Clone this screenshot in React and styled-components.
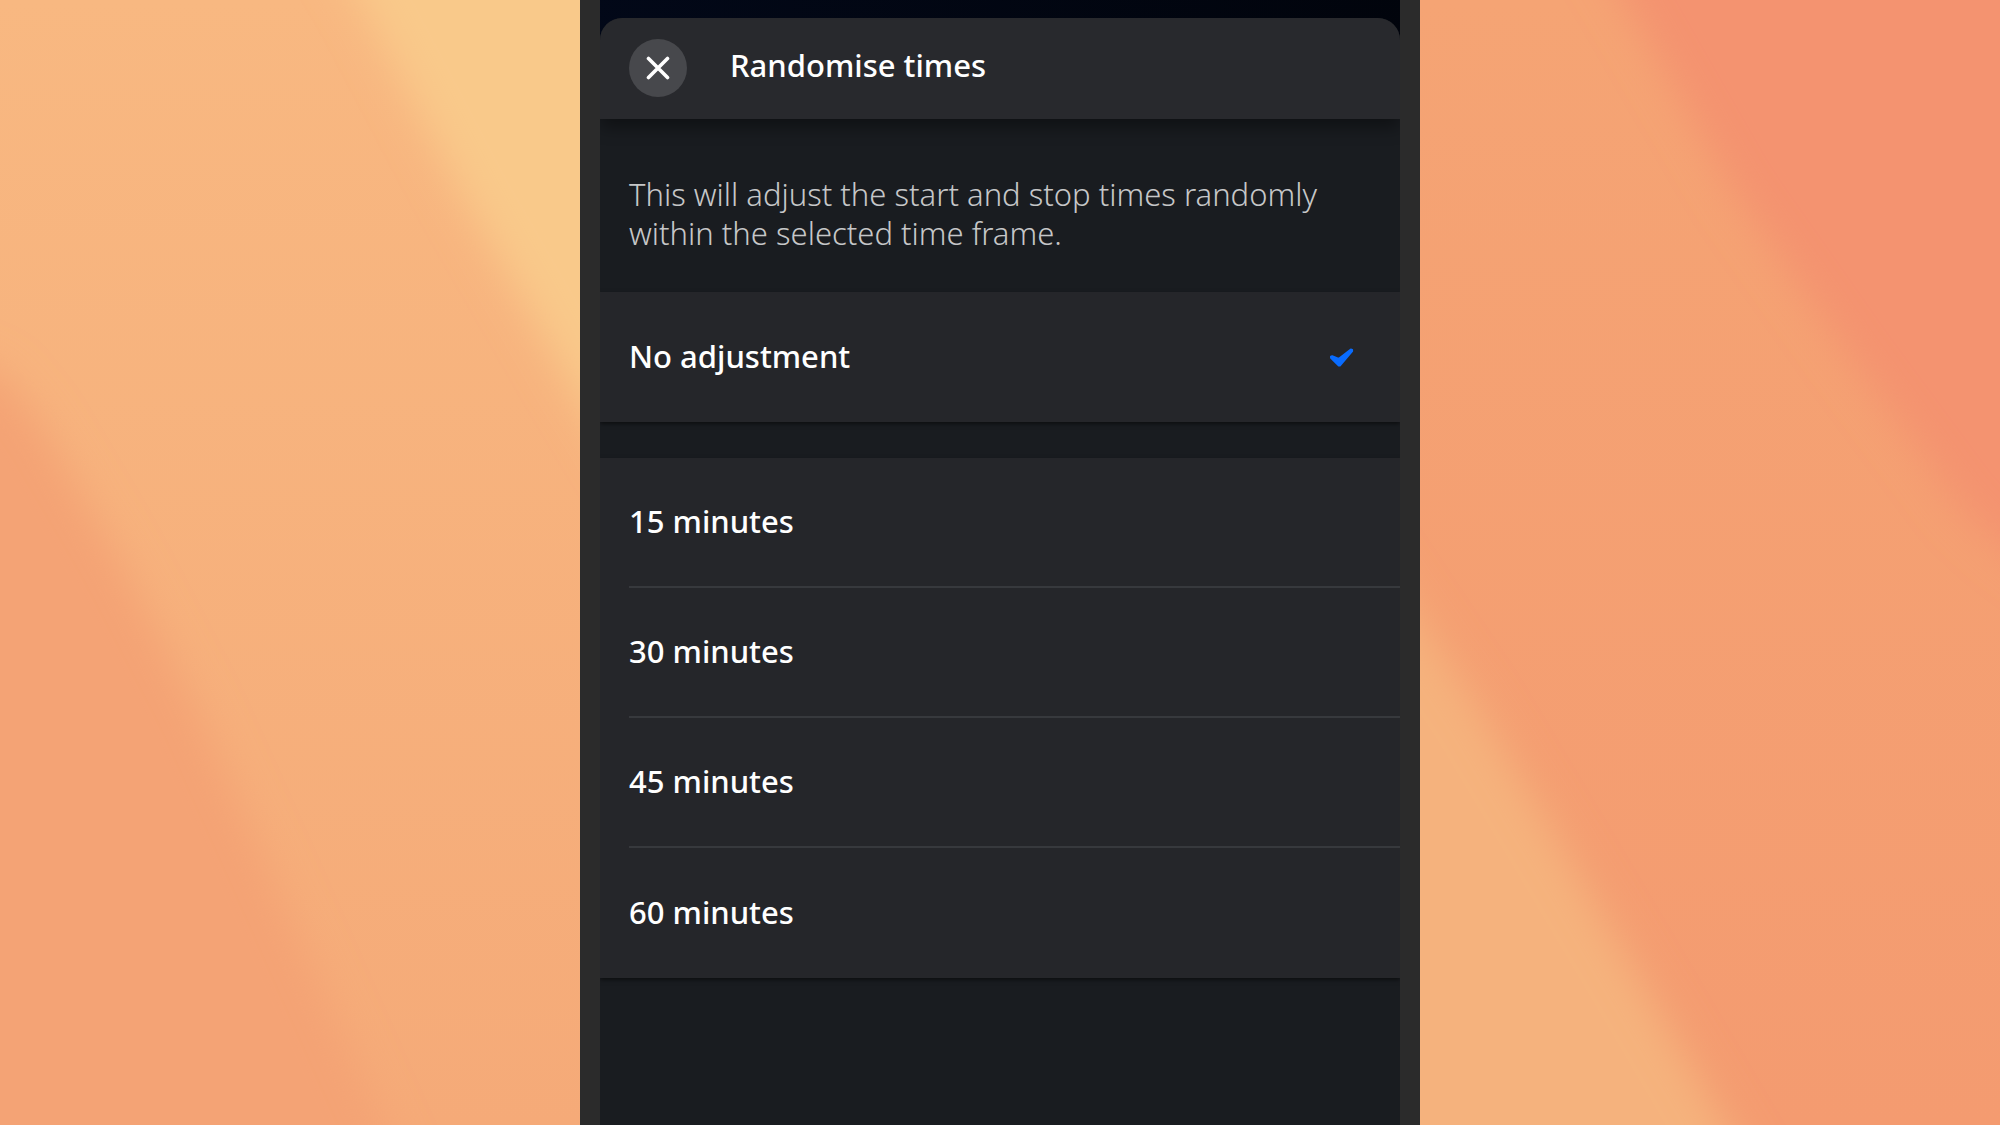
import React from 'react';
import styled, { createGlobalStyle } from 'styled-components';

const GlobalStyle = createGlobalStyle`
  *, *::before, *::after {
    box-sizing: border-box;
  }

  body {
    margin: 0;
    background: #f5ab78;
    font-family: 'Noto Sans', 'Open Sans', sans-serif;
  }
`;

const Page = styled.div`
  position: relative;
  display: flex;
  justify-content: center;
  min-height: 100vh;
  overflow: hidden;
`;

// sits behind everything else
const WallpaperSvg = styled.svg`
  position: absolute;
  inset: 0;
  width: 100%;
  height: 100%;
`;

const Phone = styled.div`
  position: relative;
  display: flex;
  width: 100%;
  max-width: 840px;
  padding: 18px 20px 0;
  background:
    linear-gradient(90deg, #2b2b2b 20px, transparent 20px, transparent calc(100% - 20px), #2b2b2b calc(100% - 20px)),
    linear-gradient(90deg, #020818, #01040c);
`;

const Sheet = styled.main`
  flex: 1;
  overflow: clip;
  background: #191c20;
  border-radius: 22px 22px 0 0;
`;

const Header = styled.header`
  position: relative;
  display: flex;
  align-items: center;
  gap: 43px;
  padding: 21px 29px 22px;
  background: #28292d;
  box-shadow: 0 8px 16px rgba(0, 0, 0, 0.4);
`;

const CloseButton = styled.button`
  display: flex;
  align-items: center;
  justify-content: center;
  width: 58px;
  height: 58px;
  padding: 0;
  border: none;
  border-radius: 50%;
  background: #47484c;
  color: #fff;
  cursor: pointer;
`;

const Title = styled.h1`
  margin: 0;
  padding-bottom: 6px;
  font-size: 31px;
  font-weight: 500;
  line-height: 40px;
  color: #fff;
`;

const Description = styled.p`
  margin: 0;
  padding: 56px 29px 39px;
  font-size: 31px;
  font-weight: 300;
  line-height: 39px;
  color: #c6c7c8;
`;

const OptionGroup = styled.div`
  margin-bottom: 36px;
  background: #25262a;
  box-shadow: 0 2px 4px rgba(0, 0, 0, 0.5);
`;

const OptionRow = styled.label`
  display: flex;
  align-items: center;
  justify-content: space-between;
  height: 130px;
  margin-left: 29px;
  padding-right: 46px;
  cursor: pointer;

  &:not(:last-child) {
    border-bottom: 2px solid #37393d;
  }
`;

const OptionText = styled.span`
  padding-bottom: 3px;
  font-size: 31px;
  font-weight: 500;
  line-height: 40px;
  color: #fff;
`;

const RadioMark = styled.span`
  display: grid;

  & > * {
    grid-area: 1 / 1;
  }

  svg {
    visibility: hidden;
    pointer-events: none;
  }

  input:checked + svg {
    visibility: visible;
  }
`;

const Radio = styled.input`
  appearance: none;
  width: 24px;
  height: 22px;
  margin: 0;
  cursor: pointer;
`;

const Wallpaper = () => (
  <WallpaperSvg viewBox="0 0 2000 1125" preserveAspectRatio="none" aria-hidden="true">
    <defs>
      <linearGradient id="leftBase" x1="0" y1="0" x2="0" y2="1">
        <stop offset="0" stopColor="#f8b881" />
        <stop offset="1" stopColor="#f5aa78" />
      </linearGradient>
      <linearGradient id="rightBase" x1="0" y1="0" x2="0" y2="1">
        <stop offset="0" stopColor="#f5a474" />
        <stop offset="1" stopColor="#f49b70" />
      </linearGradient>
      <filter id="soft" x="-20%" y="-20%" width="140%" height="140%">
        <feGaussianBlur stdDeviation="20" />
      </filter>
    </defs>
    <rect width="1000" height="1125" fill="url(#leftBase)" />
    <rect x="1000" width="1000" height="1125" fill="url(#rightBase)" />
    <g filter="url(#soft)">
      <path d="M324 -60 L360 0 L465 200 L580 400 L700 600 V-60 Z" fill="#f9c98a" />
      <path d="M-60 350 L0 374 L38 420 L115 552 L196 707 L278 890 L382 1125 L415 1200 H-60 Z" fill="#f4a374" />
      <path d="M1588 -60 L1624 0 L1735 194 L1855 365 L1962 510 L2000 545 L2060 590 V-60 Z" fill="#f49370" />
      <path d="M1340 500 L1420 620 L1478 706 L1558 840 L1638 975 L1726 1125 L1770 1200 H1340 Z" fill="#f5b27d" />
    </g>
  </WallpaperSvg>
);

const CloseIcon = () => (
  <svg width="24" height="24" viewBox="0 0 24 24" fill="none" aria-hidden="true">
    <path d="M2.5 2.5 L21.5 21.5 M21.5 2.5 L2.5 21.5" stroke="currentColor" strokeWidth="3.6" strokeLinecap="round" />
  </svg>
);

const CheckIcon = () => (
  <svg width="24" height="22" viewBox="0 0 24 22" aria-hidden="true">
    <path
      d="M0.9 10.6 L2.2 10.1 L8.8 12.8 L20.8 3.4 L22.2 3.8 L22.2 5.2 L9.9 19.6 L8.7 19.6 L0.9 11.8 Z"
      fill="#0a6cff"
      stroke="#0a6cff"
      strokeWidth="1.8"
      strokeLinejoin="round"
    />
  </svg>
);

const Option = ({ value, label, selected }) => (
  <OptionRow>
    <OptionText>{label}</OptionText>
    <RadioMark>
      <Radio type="radio" name="randomise" value={value} defaultChecked={selected} />
      <CheckIcon />
    </RadioMark>
  </OptionRow>
);

const App = () => {
  const intervals = [15, 30, 45, 60];

  return (
    <Page>
      <GlobalStyle />
      <Wallpaper />
      <Phone>
        <Sheet>
          <Header>
            <CloseButton type="button" aria-label="Close">
              <CloseIcon />
            </CloseButton>
            <Title>Randomise times</Title>
          </Header>

          <Description>
            This will adjust the start and stop times randomly within the selected time frame.
          </Description>

          <OptionGroup>
            <Option value="0" label="No adjustment" selected />
          </OptionGroup>

          <OptionGroup>
            {intervals.map(minutes => (
              <Option key={minutes} value={minutes} label={`${minutes} minutes`} />
            ))}
          </OptionGroup>
        </Sheet>
      </Phone>
    </Page>
  );
};

export default App;
